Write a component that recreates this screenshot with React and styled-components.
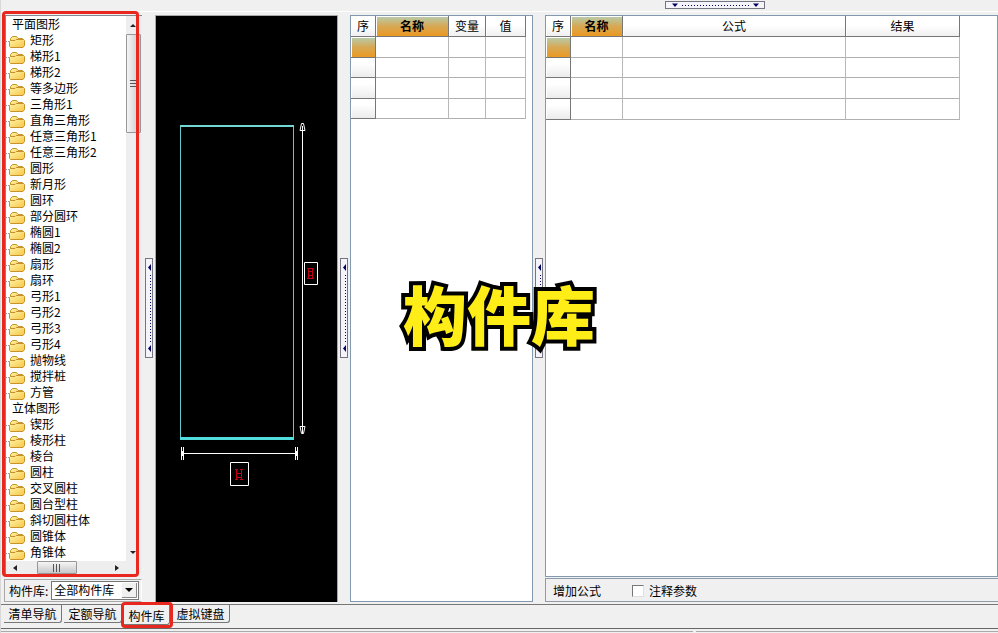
import React from "react";
import styled, { createGlobalStyle, css } from "styled-components";

const Global = createGlobalStyle`
  * { box-sizing: border-box; }
  html, body { margin: 0; background: #f0f0f0; }
  body, button, input, select, table {
    font-family: "Noto Sans CJK SC", "Liberation Sans", sans-serif;
    font-size: 12px;
    line-height: 16px;
    color: #000;
  }
  button, input { margin: 0; padding: 0; }
`;

const Page = styled.div`
  min-height: 100vh;
  display: flex;
  flex-direction: column;
  overflow: hidden;
  border-left: 1px solid #d8d8d8;
`;

const TopBar = styled.header`
  height: 12px;
  display: flex;
  justify-content: center;
  align-items: flex-start;
  padding: 1px 0 0 430px;
  border-bottom: 1px solid #fff;
`;

const Workspace = styled.main`
  flex: 1;
  display: flex;
  padding: 3px 0 2px 3px;
  border-bottom: 1px solid #777;
  position: relative;
`;

const SideBar = styled.aside`
  width: 138px;
  display: flex;
  flex-direction: column;
  flex-shrink: 0;
`;

const TreeFrame = styled.section`
  position: relative;
  flex: 1;
  display: flex;
  flex-direction: column;
  background: #fff;
  border-left: 2px solid #828790;
  border-top: 1px solid #828790;
`;

const TreeBody = styled.div`
  display: flex;
  flex: 1;
`;

const TreeList = styled.ul`
  list-style: none;
  margin: 0;
  padding: 0;
  flex: 1;
`;

const TreeItem = styled.li`
  height: 16px;
  display: flex;
  align-items: center;
  gap: 4px;
  white-space: nowrap;
  padding-left: ${(p) => (p.$group ? "6px" : "0")};
`;

const VScroll = styled.div`
  width: 16px;
  display: flex;
  flex-direction: column;
  align-items: flex-start;
  background: #eee;
`;

const HScroll = styled.div`
  height: 13px;
  display: flex;
  align-items: center;
  background: #eee;
  padding: 0 18px 0 2px;
`;

const ScrollButton = styled.button`
  border: 0;
  background: transparent;
  width: 14px;
  height: 18px;
  flex-shrink: 0;
  display: grid;
  place-items: center;
`;

const Thumb = styled.div`
  display: grid;
  place-items: center;
  border: 1px solid #979797;
  border-radius: 1px;
  ${(p) =>
    p.$vertical
      ? css`
          width: 15px;
          height: 99px;
          background: linear-gradient(90deg, #f5f5f5, #c8c8cc);
        `
      : css`
          width: 40px;
          height: 13px;
          margin-left: 15px;
          background: linear-gradient(#f5f5f5, #c8c8cc);
        `}
`;

const Spacer = styled.div`
  flex: 1;
`;

const Highlight = styled.div`
  position: absolute;
  pointer-events: none;
  border: 3px solid #e8281e;
  border-radius: 4px;
  inset: ${(p) => p.$inset};
  z-index: 3;
`;

const LibraryRow = styled.div`
  margin-top: 5px;
  height: 23px;
  display: flex;
  align-items: center;
  gap: 3px;
  padding: 0 2px 0 4px;
  border: 1px solid #a8a8a8;
  border-right-color: #fff;
  label { white-space: nowrap; }
`;

const SelectBox = styled.div`
  position: relative;
  flex: 1;
  height: 19px;
  border: 1px solid #777;
  background: #fff;
  svg {
    position: absolute;
    right: 1px;
    top: 1px;
    pointer-events: none;
  }
`;

const Select = styled.select`
  appearance: none;
  display: block;
  width: 100%;
  height: 16px;
  border: 0;
  padding: 0 0 0 2px;
  background: transparent;
`;

const Splitter = styled.div`
  width: ${(p) => p.$width};
  display: flex;
  align-items: center;
  justify-content: center;
  padding-bottom: 2px;
  flex-shrink: 0;
`;

const Grip = styled.button`
  display: grid;
  place-items: center;
  border: 1px solid #75757f;
  background: #f4f4fa;
  width: ${(p) => (p.$vertical ? "8px" : "100px")};
  height: ${(p) => (p.$vertical ? "100px" : "8px")};
  overflow: hidden;
`;

const Drawing = styled.section`
  flex: 0 0 183px;
  background: #000;
  border: 1px solid #a8a8a8;
  border-bottom: 0;
  svg { display: block; }
`;

const Panel = styled.section`
  flex: ${(p) => p.$flex};
  background: #fff;
  border: 1px solid #8299b0;
  min-width: 0;
`;

const RightColumn = styled.div`
  flex: 1;
  display: flex;
  flex-direction: column;
  min-width: 0;
`;

const FormulaBar = styled.div`
  height: 24px;
  margin-top: 1px;
  display: flex;
  align-items: center;
  gap: 31px;
  padding: 2px 0 0 7px;
  border: 1px solid #8f9ba7;
  border-right: 0;
`;

const PlainButton = styled.button`
  border: 0;
  background: transparent;
`;

const CheckLabel = styled.label`
  display: flex;
  align-items: center;
  gap: 5px;
`;

const Check = styled.input`
  appearance: none;
  width: 12px;
  height: 12px;
  background: #fff;
  border: 1px solid #e0e0e0;
  border-top-color: #777;
  border-left-color: #777;
`;

const Table = styled.table`
  table-layout: fixed;
  border-collapse: separate;
  border-spacing: 0;
  width: ${(p) => p.$width};
`;

const HeadCell = styled.th`
  height: 21px;
  padding: 0;
  font-weight: ${(p) => (p.$active ? 700 : 400)};
  border-right: 1px solid #777;
  border-bottom: 1px solid #777;
  box-shadow: inset 1px 1px #fff;
  background: ${(p) =>
    p.$active ? "linear-gradient(#b5ceb0, #d6a956 50%, #ec9820)" : "linear-gradient(#fff 45%, #f0f0f0)"};
`;

const Cell = styled.td`
  height: ${(p) => (p.$tall ? "21px" : "20px")};
  padding: 0;
  border-right: 1px solid #b8b8b8;
  border-bottom: 1px solid #b0b0b0;
`;

const RowHead = styled.th`
  padding: 0;
  border-right: 1px solid #777;
  border-bottom: 1px solid #777;
  background: ${(p) =>
    p.$active ? "linear-gradient(#b5ceb0, #d6a956 50%, #ea9a22)" : "linear-gradient(#fff 30%, #ececec)"};
  box-shadow: inset 1px 1px #fff;
`;

const Caption = styled.h1`
  position: absolute;
  left: 402px;
  top: 264px;
  margin: 0;
  font-family: "Noto Sans CJK SC", sans-serif;
  font-size: 64px;
  line-height: 72px;
  font-weight: 900;
  color: #ffed18;
  -webkit-text-stroke: 8px #000;
  paint-order: stroke fill;
  white-space: nowrap;
  z-index: 4;
`;

const Tabs = styled.nav`
  height: 24px;
  display: flex;
  align-items: flex-start;
  padding: 0 0 0 3px;
  gap: 2px;
  border-bottom: 1px solid #666;
`;

const Tab = styled.button`
  position: relative;
  height: ${(p) => (p.$active ? "20px" : "18px")};
  width: ${(p) => (p.$active ? "46px" : "58px")};
  padding-top: ${(p) => (p.$active ? "2px" : "0")};
  border: 0;
  border-right: 1px solid #777;
  border-bottom: 1px solid #777;
  border-radius: 0 0 3px 0;
  background: #f0f0f0;
  white-space: nowrap;
`;

const StatusBar = styled.footer`
  height: 4px;
  display: flex;
  gap: 3px;
  padding-top: 2px;
  div { border-top: 1px solid #aaa; flex: 0 0 692px; }
  div + div { flex: 1; }
`;

const plane = ["矩形", "梯形1", "梯形2", "等多边形", "三角形1", "直角三角形", "任意三角形1", "任意三角形2", "圆形", "新月形", "圆环", "部分圆环", "椭圆1", "椭圆2", "扇形", "扇环", "弓形1", "弓形2", "弓形3", "弓形4", "抛物线", "搅拌桩", "方管"];
const solid = ["锲形", "棱形柱", "棱台", "圆柱", "交叉圆柱", "圆台型柱", "斜切圆柱体", "圆锥体", "角锥体"];

function Folder() {
  return (
    <svg width="20" height="16" viewBox="0 0 20 16" aria-hidden="true">
      <defs>
        <linearGradient id="folderFront" x1="0" y1="0" x2="1" y2="1">
          <stop offset="0" stopColor="#fff3a8" />
          <stop offset="1" stopColor="#f6c544" />
        </linearGradient>
      </defs>
      <path d="M0 9.500h3" stroke="#999" strokeDasharray="1 1" />
      <path d="M4.500 14.500V6.500L6.500 4.500H10.500L12 6.500H16.500L17.500 7.500V14.500Z" fill="#ffe68a" stroke="#c8922a" />
      <path d="M4.500 15.500L3.500 14.500V9.500L4.500 8.500H9L10 7.500H17.500L18.500 8.500V13.500L17 15.500Z" fill="url(#folderFront)" stroke="#c8922a" />
    </svg>
  );
}

function Arrow({ dir }) {
  const d = { up: "M0 5L3 2L6 5Z", down: "M0 2L3 5L6 2Z", left: "M5 0L1 3L5 6Z", right: "M1 0L5 3L1 6Z" }[dir];
  return <svg width="6" height="6" aria-hidden="true"><path d={d} fill="#222" /></svg>;
}

function Ridges({ vertical }) {
  return (
    <svg width="8" height="8" aria-hidden="true">
      <path d={vertical ? "M0 .5H8M0 3.500H8M0 6.500H8" : "M.5 0V8M3.500 0V8M6.500 0V8"} stroke="#555" />
    </svg>
  );
}

function VerticalGrip() {
  return (
    <Grip $vertical aria-label="折叠">
      <svg width="6" height="98" aria-hidden="true">
        <path d="M5 5L2 8.500L5 12ZM5 86L2 89.500L5 93Z" fill="#000060" />
        <path d="M4.500 16V83" stroke="#000060" strokeDasharray="1 2" />
      </svg>
    </Grip>
  );
}

function DataTable({ columns, width, lastTall }) {
  return (
    <Table $width={width}>
      <colgroup>{columns.map((c) => <col key={c.name} width={c.width} />)}</colgroup>
      <thead>
        <tr>{columns.map((c) => <HeadCell key={c.name} scope="col" $active={c.name === "名称"}>{c.name}</HeadCell>)}</tr>
      </thead>
      <tbody>
        {[0, 1, 2, 3].map((r) => (
          <tr key={r}>
            <RowHead scope="row" $active={r === 0} />
            {columns.slice(1).map((c) => <Cell key={c.name} $tall={r === 0 || r === 2 || (r === 3 && lastTall)} />)}
          </tr>
        ))}
      </tbody>
    </Table>
  );
}

export default function App() {
  return (
    <>
      <Global />
      <Page>
        <TopBar>
          <Grip aria-label="展开">
            <svg width="98" height="6" aria-hidden="true">
              <path d="M6 1.500H12L9 5ZM87 1.500H93L90 5Z" fill="#000060" />
              <path d="M16 3.500H84" stroke="#000060" strokeDasharray="1 2" />
            </svg>
          </Grip>
        </TopBar>
        <Workspace>
          <SideBar>
            <TreeFrame>
              <TreeBody>
                <TreeList>
                  <TreeItem $group>平面图形</TreeItem>
                  {plane.map((n) => <TreeItem key={n}><Folder />{n}</TreeItem>)}
                  <TreeItem $group>立体图形</TreeItem>
                  {solid.map((n) => <TreeItem key={n}><Folder />{n}</TreeItem>)}
                </TreeList>
                <VScroll>
                  <ScrollButton aria-label="向上"><Arrow dir="up" /></ScrollButton>
                  <Thumb $vertical><Ridges vertical /></Thumb>
                  <Spacer />
                  <ScrollButton aria-label="向下"><Arrow dir="down" /></ScrollButton>
                </VScroll>
              </TreeBody>
              <HScroll>
                <ScrollButton aria-label="向左"><Arrow dir="left" /></ScrollButton>
                <Thumb><Ridges /></Thumb>
                <Spacer />
                <ScrollButton aria-label="向右"><Arrow dir="right" /></ScrollButton>
              </HScroll>
              <Highlight $inset="-5px 3px -3px -4px" />
            </TreeFrame>
            <LibraryRow>
              <label htmlFor="library">构件库:</label>
              <SelectBox>
                <Select id="library" defaultValue="全部构件库"><option>全部构件库</option></Select>
                <svg width="15" height="15" aria-hidden="true">
                  <path d="M0 0H15V15H0Z" fill="#f0f0f0" />
                  <path d="M14.500 0V14.500H0" fill="none" stroke="#888" />
                  <path d="M3 5H11L7 9Z" />
                </svg>
              </SelectBox>
            </LibraryRow>
          </SideBar>
          <Splitter $width="13px"><VerticalGrip /></Splitter>
          <Drawing>
            <svg width="181" height="585" viewBox="1 0 181 585" role="img" aria-label="矩形">
              <g fill="none" stroke="#62c9c6">
                <path d="M25.500 110V423M138.500 110V423" />
                <path d="M25 110H139" stroke="#72d6d5" strokeWidth="2" />
                <path d="M25 422.500H139" stroke="#51dddd" strokeWidth="3" />
              </g>
              <g fill="none" stroke="#fff">
                <path d="M147.500 110V417M145 114.500H150L148.500 107.500H146.500ZM145 410.500H150L148.500 417.500H146.500Z" />
                <path d="M28 437.500H141M26.500 431V444M28.500 431V444M27.500 435V440M140.500 431V444M142.500 431V444M141.500 435V440" />
                <path d="M149.500 246.500H162.500V268.500H149.500ZM75.500 446.500H93.500V469.500H75.500Z" />
              </g>
              <g fill="none" stroke="#c00010">
                <path d="M152 252.500H159M152 262.500H159M153.500 253V262M157.500 253V262M154 255.500H158M154 259.500H158" />
                <path d="M81.500 453V464M86.500 453V464M80 453.500H83M85 453.500H88M82 457.500H86M82 461.500H86M80 463.500H83M85 463.500H88" />
              </g>
            </svg>
          </Drawing>
          <Splitter $width="12px"><VerticalGrip /></Splitter>
          <Panel $flex="0 0 183px">
            <DataTable width="175px" columns={[{ name: "序", width: 25 }, { name: "名称", width: 73 }, { name: "变量", width: 37 }, { name: "值", width: 40 }]} />
          </Panel>
          <Splitter $width="12px"><VerticalGrip /></Splitter>
          <RightColumn>
            <Panel $flex="1">
              <DataTable lastTall width="414px" columns={[{ name: "序", width: 25 }, { name: "名称", width: 52 }, { name: "公式", width: 223 }, { name: "结果", width: 114 }]} />
            </Panel>
            <FormulaBar>
              <PlainButton>增加公式</PlainButton>
              <CheckLabel><Check type="checkbox" />注释参数</CheckLabel>
            </FormulaBar>
          </RightColumn>
          <Caption>构件库</Caption>
        </Workspace>
        <Tabs>
          <Tab>清单导航</Tab>
          <Tab>定额导航</Tab>
          <Tab $active>构件库<Highlight $inset="-3px -4px -4px -3px" /></Tab>
          <Tab>虚拟键盘</Tab>
        </Tabs>
        <StatusBar><div /><div /></StatusBar>
      </Page>
    </>
  );
}
